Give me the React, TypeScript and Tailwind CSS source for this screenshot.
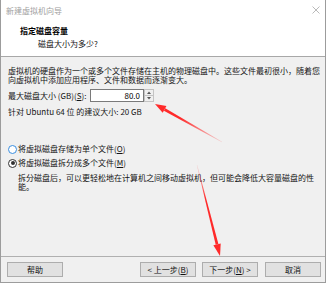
import React from "react";

function arrow(tx: number, ty: number, hx: number, hy: number, headLen = 11, headHalf = 3.8, shaftHalf = 1.4) {
  const dx = hx - tx;
  const dy = hy - ty;
  const L = Math.hypot(dx, dy);
  const ux = dx / L;
  const uy = dy / L;
  const nx = -uy;
  const ny = ux;
  const bx = hx - ux * headLen;
  const by = hy - uy * headLen;
  const p = (x: number, y: number) => `${x.toFixed(2)},${y.toFixed(2)}`;
  const shaft = [
    p(tx + nx * 0.2, ty + ny * 0.2),
    p(bx + nx * shaftHalf, by + ny * shaftHalf),
    p(bx - nx * shaftHalf, by - ny * shaftHalf),
    p(tx - nx * 0.2, ty - ny * 0.2),
  ].join(" ");
  const head = [
    p(bx + nx * headHalf, by + ny * headHalf),
    p(hx, hy),
    p(bx - nx * headHalf, by - ny * headHalf),
  ].join(" ");
  return { shaft, head };
}

function Btn({ children, w = "w-[56px]" }: { children: React.ReactNode; w?: string }) {
  return (
    <div className={`${w} h-[15px] bg-[#e1e1e1] border border-[#adadad] flex items-center justify-center leading-none text-[#111]`}>
      {children}
    </div>
  );
}

export default function App() {
  const a1 = arrow(222, 142, 155, 104);
  const a2 = arrow(197, 165, 220, 256, 12, 3.8, 1.4);
  return (
    <div className="relative w-[327px] h-[284px] bg-white font-['Noto_Sans_CJK_SC','Noto_Sans',sans-serif] text-[8px] text-[#141414]">
      <div className="flex flex-col w-[326px] h-[283px] border-x border-b border-[#9c9c9c] bg-[#f0f0f0]">
        {/* header */}
        <div className="h-[57px] bg-white border-b border-[#a8a8a8] flex flex-col shrink-0">
          <div className="h-[21px] flex items-center justify-between pl-[5px] pr-[5px]">
            <span className="text-[#a0a0a0] leading-[21px]">新建虚拟机向导</span>
            <svg width="8" height="8" viewBox="0 0 8 8" className="mt-[-1px]">
              <path d="M0.5 0.5 L7.5 7.5 M7.5 0.5 L0.5 7.5" stroke="#a8a8a8" strokeWidth="0.8" />
            </svg>
          </div>
          <div className="pl-[19px] mt-[3px] leading-[13px] font-bold text-black">指定磁盘容量</div>
          <div className="pl-[37px] leading-[13px]">磁盘大小为多少?</div>
        </div>

        {/* body */}
        <div className="flex-1 flex flex-col pl-[7px]">
          <div className="pt-[9px] flex flex-col whitespace-nowrap">
            <div className="h-[9px] leading-[9px]">虚拟机的硬盘作为一个或多个文件存储在主机的物理磁盘中。这些文件最初很小，随着您</div>
            <div className="h-[9px] leading-[9px]">向虚拟机中添加应用程序、文件和数据而逐渐变大。</div>
          </div>
          <div className="mt-[5px] h-[13px] flex items-center">
            <span className="w-[82px] whitespace-nowrap leading-[13px]">
              最大磁盘大小 (GB)(<span className="underline">S</span>):
            </span>
            <div className="w-[54px] h-[13px] bg-white border border-[#7a7a7a] flex items-center justify-end pr-[3px] leading-none text-black">
              80.0
            </div>
            <div className="w-[10px] h-[13px] flex flex-col">
              <div className="h-[6.5px] border border-[#c4c4c4] bg-[#f0f0f0] flex items-center justify-center">
                <svg width="4" height="3" viewBox="0 0 4 3">
                  <path d="M0 3 L2 0.5 L4 3 Z" fill="#555" />
                </svg>
              </div>
              <div className="h-[6.5px] border border-t-0 border-[#c4c4c4] bg-[#f0f0f0] flex items-center justify-center">
                <svg width="4" height="3" viewBox="0 0 4 3">
                  <path d="M0 0 L2 2.5 L4 0 Z" fill="#555" />
                </svg>
              </div>
            </div>
          </div>
          <div className="mt-[3px] leading-[13px] whitespace-nowrap">针对 Ubuntu 64 位 的建议大小: 20 GB</div>

          <div className="mt-[24px] h-[14px] flex items-center whitespace-nowrap">
            <span className="w-[9px] h-[9px] rounded-full border border-[#3a8ee0] bg-white" />
            <span className="ml-[1px] leading-[14px]">
              将虚拟磁盘存储为单个文件(<span className="underline">O</span>)
            </span>
          </div>
          <div className="h-[14px] flex items-center whitespace-nowrap">
            <span className="w-[9px] h-[9px] rounded-full border border-[#333] bg-white flex items-center justify-center">
              <span className="w-[4px] h-[4px] rounded-full bg-[#333]" />
            </span>
            <span className="ml-[1px] leading-[14px]">
              将虚拟磁盘拆分成多个文件(<span className="underline">M</span>)
            </span>
          </div>
          <div className="mt-[2.5px] pl-[10px] flex flex-col whitespace-nowrap">
            <div className="h-[9px] leading-[9px]">拆分磁盘后，可以更轻松地在计算机之间移动虚拟机，但可能会降低大容量磁盘的性</div>
            <div className="h-[9px] leading-[9px]">能。</div>
          </div>
        </div>

        {/* footer */}
        <div className="h-[26px] shrink-0 border-t border-[#b0b0b0] pt-[5px] flex items-start pl-[6px] pr-[4px]">
          <Btn>帮助</Btn>
          <div className="flex-1" />
          <Btn>
            &lt; 上一步(<span className="underline">B</span>)
          </Btn>
          <div className="w-[6px]" />
          <Btn>
            下一步(<span className="underline">N</span>) &gt;
          </Btn>
          <div className="w-[7px]" />
          <Btn>取消</Btn>
        </div>
      </div>

      <svg className="absolute left-0 top-0 pointer-events-none" width="327" height="284" viewBox="0 0 327 284">
        <defs>
          <linearGradient id="g1" gradientUnits="userSpaceOnUse" x1="222" y1="142" x2="180" y2="118">
            <stop offset="0" stopColor="#ff3030" stopOpacity="0.15" />
            <stop offset="1" stopColor="#ff2a2a" stopOpacity="1" />
          </linearGradient>
          <linearGradient id="g2" gradientUnits="userSpaceOnUse" x1="197" y1="165" x2="206" y2="200">
            <stop offset="0" stopColor="#ff3030" stopOpacity="0.15" />
            <stop offset="1" stopColor="#ff2a2a" stopOpacity="1" />
          </linearGradient>
        </defs>
        <polygon points={a1.shaft} fill="url(#g1)" />
        <polygon points={a1.head} fill="#ff2a2a" />
        <polygon points={a2.shaft} fill="url(#g2)" />
        <polygon points={a2.head} fill="#ff2a2a" />
      </svg>
    </div>
  );
}
